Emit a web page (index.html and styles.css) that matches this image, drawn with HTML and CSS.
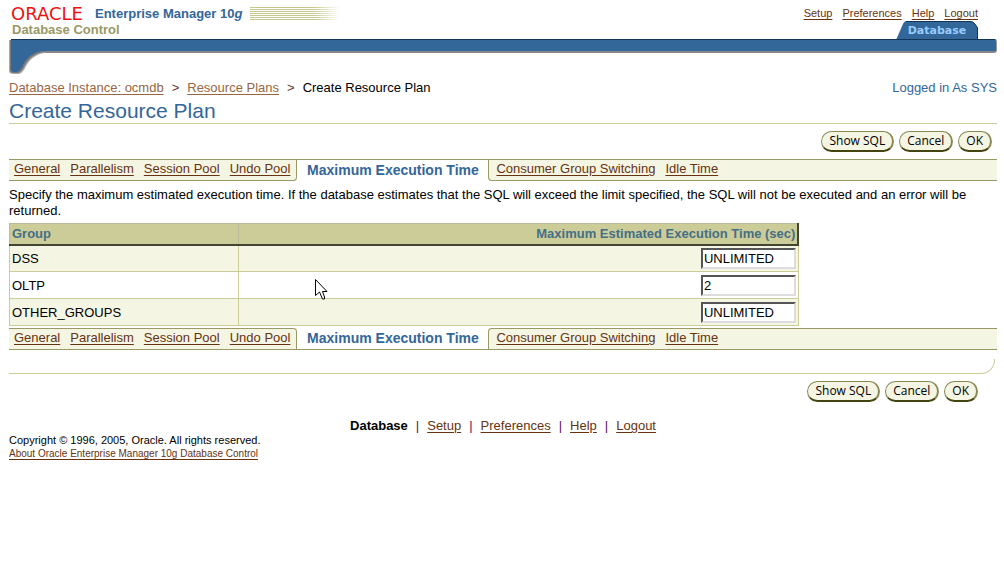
FILE: index.html
```html
<!DOCTYPE html>
<html lang="en">
<head>
<meta charset="utf-8">
<title>Create Resource Plan</title>
<link rel="stylesheet" href="styles.css">
</head>
<body>
<header class="masthead">
  <div class="brand">
    <div class="brand-line">
      <span class="oracle">ORACLE</span>
      <span class="product">Enterprise Manager 10<i>g</i></span>
      <span class="stripes"></span>
    </div>
    <div class="control">Database Control</div>
  </div>
  <div class="global">
    <nav class="global-links">
      <a href="#">Setup</a><a href="#">Preferences</a><a href="#">Help</a><a href="#">Logout</a>
    </nav>
    <a class="main-tab" href="#">
      <svg class="tab-shape" viewBox="0 0 82 19" aria-hidden="true"><path d="M0 19L7 3Q8 0 11 0H74Q77 0 79 3L82 7V19Z" fill="#336699"/><path d="M10 .5H74Q77 .5 79 3L81.500 7V19" fill="none" stroke="#12365a"/></svg>
      <span>Database</span>
    </a>
  </div>
</header>
<div class="bar">
  <svg class="swoosh" width="36" height="36" viewBox="0 0 36 36" aria-hidden="true"><path d="M0 1V33Q1 35 4 35H10Q13 34 15 31C20 20 27 15 36 14V1Z" fill="#aaa"/><path d="M1 1V32Q2 34 4 34H9Q12 33 14 30C19 19 26 14 36 13V1Z" fill="#777"/><path d="M2 0V31Q3 33 5 33H8Q11 32 13 28C17 18 25 12 36 12V0Z" fill="#336699"/><path d="M2 .5H36" stroke="#12365a"/></svg>
  <div class="bar-fill"></div>
</div>
<main>
  <div class="crumb-row">
    <nav class="crumbs"><a href="#">Database Instance: ocmdb</a><span>&gt;</span><a href="#">Resource Plans</a><span>&gt;</span><span class="here">Create Resource Plan</span></nav>
    <div class="logged">Logged in As SYS</div>
  </div>
  <h1>Create Resource Plan</h1>
  <div class="actions">
    <button type="button">Show SQL</button><button type="button">Cancel</button><button type="button">OK</button>
  </div>
  <nav class="tabs">
    <div class="tab-group before"><a href="#">General</a><a href="#">Parallelism</a><a href="#">Session Pool</a><a href="#">Undo Pool</a></div>
    <div class="current">Maximum Execution Time</div>
    <div class="tab-group after"><a href="#">Consumer Group Switching</a><a href="#">Idle Time</a></div>
  </nav>
  <p class="intro">Specify the maximum estimated execution time. If the database estimates that the SQL will exceed the limit specified, the SQL will not be executed and an error will be returned.</p>
  <table>
    <thead><tr><th>Group</th><th class="num">Maximum Estimated Execution Time (sec)</th></tr></thead>
    <tbody>
      <tr><td><label for="dss">DSS</label></td><td class="num"><input id="dss" type="text" value="UNLIMITED"></td></tr>
      <tr><td><label for="oltp">OLTP</label></td><td class="num"><input id="oltp" type="text" value="2"></td></tr>
      <tr><td><label for="other">OTHER_GROUPS</label></td><td class="num"><input id="other" type="text" value="UNLIMITED"></td></tr>
    </tbody>
  </table>
  <nav class="tabs bottom">
    <div class="tab-group before"><a href="#">General</a><a href="#">Parallelism</a><a href="#">Session Pool</a><a href="#">Undo Pool</a></div>
    <div class="current">Maximum Execution Time</div>
    <div class="tab-group after"><a href="#">Consumer Group Switching</a><a href="#">Idle Time</a></div>
  </nav>
  <div class="end-rule"></div>
  <div class="actions end">
    <button type="button">Show SQL</button><button type="button">Cancel</button><button type="button">OK</button>
  </div>
</main>
<footer>
  <nav class="foot-links"><b>Database</b><span>|</span><a href="#">Setup</a><span>|</span><a href="#">Preferences</a><span>|</span><a href="#">Help</a><span>|</span><a href="#">Logout</a></nav>
  <div class="legal">Copyright © 1996, 2005, Oracle. All rights reserved.</div>
  <div class="about"><a href="#">About Oracle Enterprise Manager 10g Database Control</a></div>
</footer>
<svg class="pointer" width="13" height="21" viewBox="0 0 13 21" aria-hidden="true"><path d="M.5.5V16.500L4.500 13L7.500 20H9.500V18L7.500 12.500H12Z" fill="#fff" stroke="#000"/></svg>
</body>
</html>
```
FILE: styles.css
```css
* { box-sizing: border-box; }
body {
  margin: 0;
  padding: 5px 7px 0 9px;
  background: #fff;
  color: #000;
  font: 13px/16px "Liberation Sans", Arial, sans-serif;
}
a { color: #663311; text-underline-offset: 2px; }
.masthead { display: flex; justify-content: space-between; height: 34px; }
.brand { padding-left: 2px; }
.brand-line { display: flex; align-items: center; height: 17px; }
.oracle { width: 84px; color: #ee1111; font: 18px/16px "DejaVu Sans", sans-serif; }
.product { color: #336699; font-weight: bold; }
.stripes {
  width: 90px;
  height: 13px;
  margin-left: 8px;
  background: linear-gradient(to right, rgba(255, 255, 255, 0) 70%, #fff), repeating-linear-gradient(#c6c68e 0 1px, #fff 1px 2px);
}
.control { padding-left: 1px; color: #999966; font-weight: bold; }
.global { display: flex; flex-direction: column; justify-content: space-between; align-items: flex-end; padding-right: 19px; }
.global-links { display: flex; gap: 10px; font-size: 11px; }
.main-tab { display: grid; width: 82px; height: 19px; color: #99ccff; font: bold 11px/19px "DejaVu Sans", sans-serif; text-align: center; text-decoration: none; }
.tab-shape, .main-tab span { grid-area: 1 / 1; }
.bar { display: flex; height: 36px; }
.swoosh { flex: none; }
.bar-fill {
  flex: 1;
  height: 14px;
  border-top: 1px solid #12365a;
  border-right: 1px solid #999;
  border-bottom: 2px solid #888;
  border-radius: 0 3px 3px 0;
  background: #336699;
}
.crumb-row { display: flex; justify-content: space-between; padding-top: 5px; }
.crumbs { display: flex; gap: 8px; }
.crumbs a { color: #996644; }
.crumbs span { color: #663333; }
.crumbs .here { color: #000; }
.logged { color: #336699; }
h1 { margin: 4px 0 0; padding-bottom: 1px; border-bottom: 1px solid #cccc99; color: #336699; font-size: 21px; font-weight: normal; line-height: 22px; }
.actions { display: flex; justify-content: flex-end; gap: 5px; padding: 7px 5px 7px 0; }
button {
  height: 21px;
  padding: 0 7px;
  border: 1px solid #888855;
  border-right-width: 2px;
  border-bottom: 2px solid #444411;
  border-radius: 11px;
  background: #f5f5e4;
  color: #000;
  font: 12px/16px "Open Sans", sans-serif;
}
.tabs { display: flex; height: 22px; background: #f5f5e4; }
.tab-group { display: flex; gap: 10px; padding: 0 6px 0 5px; border: 1px solid #999966; background: #f5f5e4; line-height: 18px; }
.before { border-left: 0; border-bottom-right-radius: 4px; }
.after { flex: 1; border-right: 0; border-bottom-left-radius: 4px; padding-left: 7px; }
.current { width: 191px; border-top: 1px solid #999966; background: #fff; color: #336699; font-size: 14px; font-weight: bold; line-height: 20px; text-align: center; }
.bottom { margin-top: 2px; }
.bottom .before { border-radius: 0 4px 0 0; }
.bottom .after { border-radius: 4px 0 0 0; }
.bottom .current { border-top: 0; border-bottom: 1px solid #999966; }
.intro { margin: 6px 0 4px; }
table { width: 80%; border-collapse: collapse; table-layout: fixed; }
th, td { height: 27px; padding: 2px 2px 0; border: 1px solid #cccc99; text-align: left; }
th { height: 21px; padding: 0 2px; border-color: #bbbb99; border-bottom: 2px solid #444433; background: #cccc99; color: #446f86; line-height: 18px; }
th:first-child { width: 29%; }
th:last-child { border-right: 2px solid #444433; }
tr:nth-child(odd) td { background: #f5f5e4; }
.num { padding-top: 0; text-align: right; }
input {
  display: block;
  width: 95px;
  height: 21px;
  margin-left: auto;
  padding: 0 1px;
  border: 2px solid #ddd;
  border-top-color: #555;
  border-left-color: #555;
  background: #fff;
  color: #000;
  font: 13px/16px "Liberation Sans", Arial, sans-serif;
}
.end-rule { height: 15px; margin: 9px 2px 0 0; border: solid #cccc99; border-width: 0 1px 1px 0; border-bottom-right-radius: 14px; }
.end { padding-right: 19px; padding-bottom: 16px; }
.foot-links { display: flex; justify-content: center; gap: 8px; }
.foot-links span { color: #551155; }
.legal { font-size: 11px; line-height: 13px; }
.about { font-size: 10px; line-height: 14px; }
.pointer { position: absolute; left: 315px; top: 279px; }
```
